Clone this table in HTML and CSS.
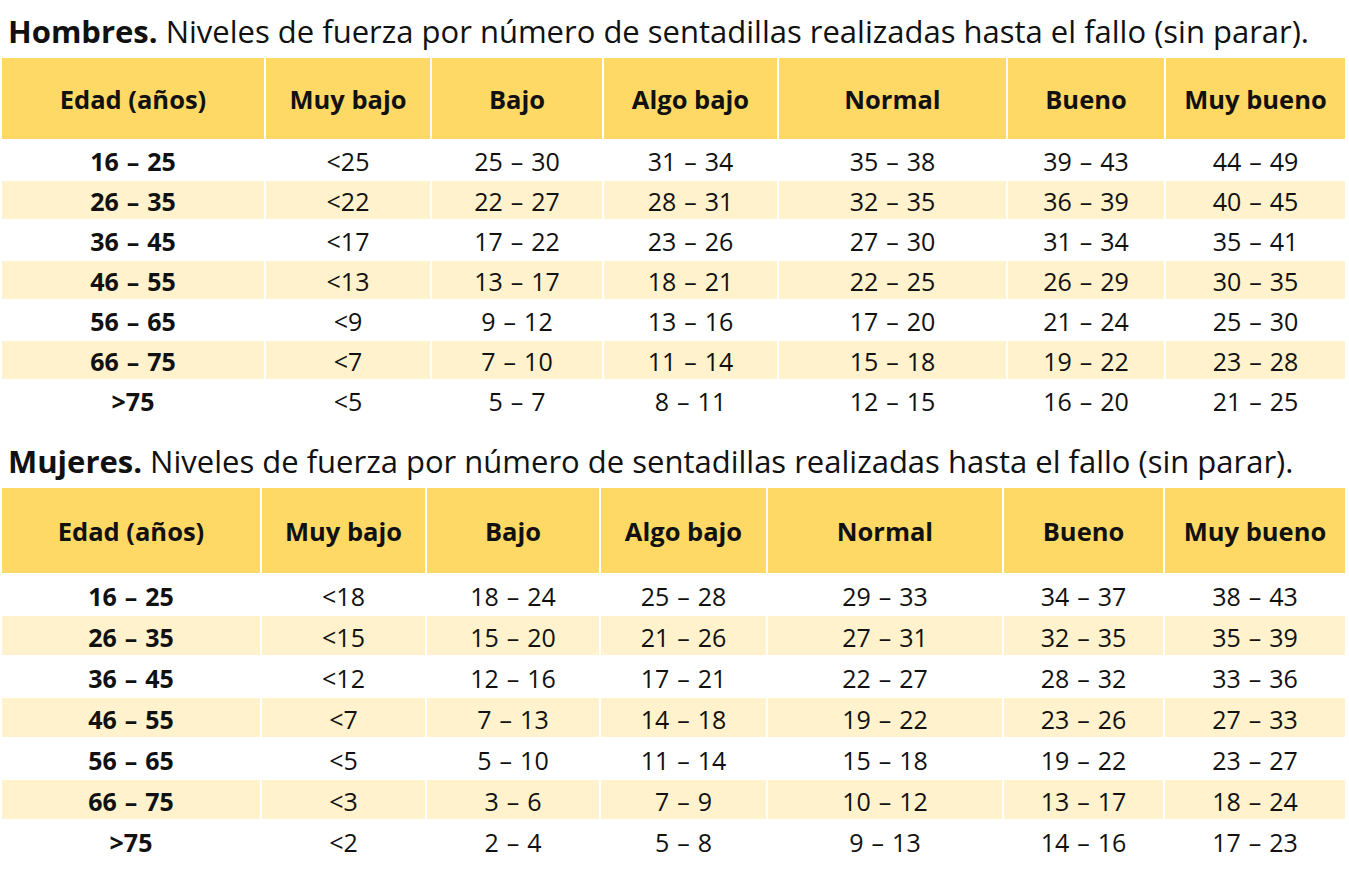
FILE: index.html
```html
<!DOCTYPE html>
<html lang="es">
<head>
<meta charset="utf-8">
<title>Niveles de fuerza - sentadillas</title>
<link rel="stylesheet" href="styles.css">
</head>
<body>
<section class="block">
  <h2 class="title title-first"><b>Hombres.</b> Niveles de fuerza por número de sentadillas realizadas hasta el fallo (sin parar).</h2>
  <table class="grid grid-men">
    <colgroup>
      <col class="m1"><col class="m2"><col class="m3"><col class="m4"><col class="m5"><col class="m6"><col class="m7">
    </colgroup>
    <thead>
      <tr><th>Edad (años)</th><th>Muy bajo</th><th>Bajo</th><th>Algo bajo</th><th>Normal</th><th>Bueno</th><th>Muy bueno</th></tr>
    </thead>
    <tbody>
      <tr><td class="age">16 – 25</td><td>&lt;25</td><td>25 – 30</td><td>31 – 34</td><td>35 – 38</td><td>39 – 43</td><td>44 – 49</td></tr>
      <tr class="alt"><td class="age">26 – 35</td><td>&lt;22</td><td>22 – 27</td><td>28 – 31</td><td>32 – 35</td><td>36 – 39</td><td>40 – 45</td></tr>
      <tr><td class="age">36 – 45</td><td>&lt;17</td><td>17 – 22</td><td>23 – 26</td><td>27 – 30</td><td>31 – 34</td><td>35 – 41</td></tr>
      <tr class="alt"><td class="age">46 – 55</td><td>&lt;13</td><td>13 – 17</td><td>18 – 21</td><td>22 – 25</td><td>26 – 29</td><td>30 – 35</td></tr>
      <tr><td class="age">56 – 65</td><td>&lt;9</td><td>9 – 12</td><td>13 – 16</td><td>17 – 20</td><td>21 – 24</td><td>25 – 30</td></tr>
      <tr class="alt"><td class="age">66 – 75</td><td>&lt;7</td><td>7 – 10</td><td>11 – 14</td><td>15 – 18</td><td>19 – 22</td><td>23 – 28</td></tr>
      <tr><td class="age">&gt;75</td><td>&lt;5</td><td>5 – 7</td><td>8 – 11</td><td>12 – 15</td><td>16 – 20</td><td>21 – 25</td></tr>
    </tbody>
  </table>
</section>
<section class="block">
  <h2 class="title title-second"><b>Mujeres.</b> Niveles de fuerza por número de sentadillas realizadas hasta el fallo (sin parar).</h2>
  <table class="grid grid-women">
    <colgroup>
      <col class="w1"><col class="w2"><col class="w3"><col class="w4"><col class="w5"><col class="w6"><col class="w7">
    </colgroup>
    <thead>
      <tr><th>Edad (años)</th><th>Muy bajo</th><th>Bajo</th><th>Algo bajo</th><th>Normal</th><th>Bueno</th><th>Muy bueno</th></tr>
    </thead>
    <tbody>
      <tr><td class="age">16 – 25</td><td>&lt;18</td><td>18 – 24</td><td>25 – 28</td><td>29 – 33</td><td>34 – 37</td><td>38 – 43</td></tr>
      <tr class="alt"><td class="age">26 – 35</td><td>&lt;15</td><td>15 – 20</td><td>21 – 26</td><td>27 – 31</td><td>32 – 35</td><td>35 – 39</td></tr>
      <tr><td class="age">36 – 45</td><td>&lt;12</td><td>12 – 16</td><td>17 – 21</td><td>22 – 27</td><td>28 – 32</td><td>33 – 36</td></tr>
      <tr class="alt"><td class="age">46 – 55</td><td>&lt;7</td><td>7 – 13</td><td>14 – 18</td><td>19 – 22</td><td>23 – 26</td><td>27 – 33</td></tr>
      <tr><td class="age">56 – 65</td><td>&lt;5</td><td>5 – 10</td><td>11 – 14</td><td>15 – 18</td><td>19 – 22</td><td>23 – 27</td></tr>
      <tr class="alt"><td class="age">66 – 75</td><td>&lt;3</td><td>3 – 6</td><td>7 – 9</td><td>10 – 12</td><td>13 – 17</td><td>18 – 24</td></tr>
      <tr><td class="age">&gt;75</td><td>&lt;2</td><td>2 – 4</td><td>5 – 8</td><td>9 – 13</td><td>14 – 16</td><td>17 – 23</td></tr>
    </tbody>
  </table>
</section>
</body>
</html>
```
FILE: styles.css
```css
html, body {
  margin: 0;
  padding: 0;
  background: #ffffff;
}
body {
  font-family: "Open Sans", "Liberation Sans", sans-serif;
  color: #111111;
  width: 1349px;
}
.title {
  margin: 0 0 7px 0;
  padding-left: 8px;
  font-size: 31px;
  line-height: 36px;
  font-weight: 400;
  white-space: nowrap;
}
.title b {
  font-weight: 700;
}
.title-first {
  padding-top: 13px;
}
.title-second {
  padding-top: 22px;
}
.grid {
  table-layout: fixed;
  border-collapse: separate;
  border-spacing: 2px;
  width: 1347px;
}
.grid th,
.grid td {
  padding: 0;
  text-align: center;
  vertical-align: middle;
}
.grid th {
  background: #ffd966;
  font-size: 25.5px;
  font-weight: 700;
}
.grid-men th { height: 81px; }
.grid-women th { height: 85px; }
.grid td {
  font-size: 25px;
  font-weight: 400;
  word-spacing: 1.5px;
  padding-top: 2px;
  line-height: 34px;
}
.grid-men td { height: 36px; }
.grid-women td { height: 37px; }
.grid td.age {
  font-weight: 700;
}
.grid tr.alt td {
  background: #fff2cc;
}
.m1 { width: 262px; }
.m2 { width: 164px; }
.m3 { width: 170px; }
.m4 { width: 173px; }
.m5 { width: 227px; }
.m6 { width: 156px; }
.m7 { width: 179px; }
.w1 { width: 258px; }
.w2 { width: 163px; }
.w3 { width: 172px; }
.w4 { width: 165px; }
.w5 { width: 234px; }
.w6 { width: 159px; }
.w7 { width: 180px; }
```
